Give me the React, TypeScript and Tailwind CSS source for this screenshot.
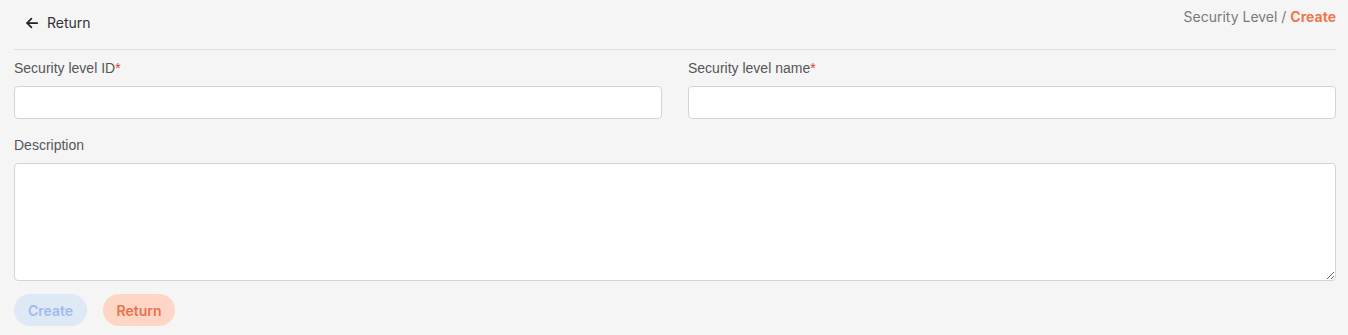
import React from "react";

const labelFont = { fontFamily: '"Liberation Sans", Arial, sans-serif' };

function Field({ label, required }: { label: string; required?: boolean }) {
  return (
    <div className="flex flex-col">
      <label className="text-[14px] leading-5 text-[#555] mb-2" style={labelFont}>
        {label}
        {required && <span className="text-[#e53935]">*</span>}
      </label>
      <input
        type="text"
        className="h-[33px] w-full rounded-[4px] border border-[#d4d4d4] bg-white px-3 text-sm outline-none"
      />
    </div>
  );
}

export default function App() {
  return (
    <div className="min-h-[335px] w-full bg-[#f5f5f5] pl-[14px] pr-[12px] font-['Inter',sans-serif]">
      <div className="flex h-[50px] items-start justify-between border-b border-[#dedede]">
        <button className="ml-[11px] mt-[12px] flex items-center gap-[8px] text-[14px] text-[#333]">
          <svg width="14" height="14" viewBox="0 0 24 24" fill="none" stroke="#222" strokeWidth="3" strokeLinecap="round" strokeLinejoin="round">
            <path d="M21 12H4" />
            <path d="M11 4.5l-7.5 7.5 7.5 7.5" />
          </svg>
          Return
        </button>
        <div className="mt-[6px] text-[14px] text-[#7a7a7a]">
          Security Level / <span className="font-bold text-[#f0764a]">Create</span>
        </div>
      </div>

      <div className="mt-[8px] grid grid-cols-2 gap-[26px]">
        <Field label="Security level ID" required />
        <Field label="Security level name" required />
      </div>

      <div className="mt-[16px] flex flex-col">
        <label className="text-[14px] leading-5 text-[#555] mb-2" style={labelFont}>
          Description
        </label>
        <textarea className="h-[118px] w-full rounded-[4px] border border-[#d4d4d4] bg-white p-3 text-sm outline-none" />
      </div>

      <div className="mt-[13px] flex gap-[16px]">
        <button className="h-[32px] w-[73px] rounded-full bg-[#dfe8f5] text-[14px] font-semibold text-[#9fbcec]">
          Create
        </button>
        <button className="h-[32px] w-[72px] rounded-full bg-[#fdd6c6] text-[14px] font-semibold text-[#e8734d]">
          Return
        </button>
      </div>
    </div>
  );
}
